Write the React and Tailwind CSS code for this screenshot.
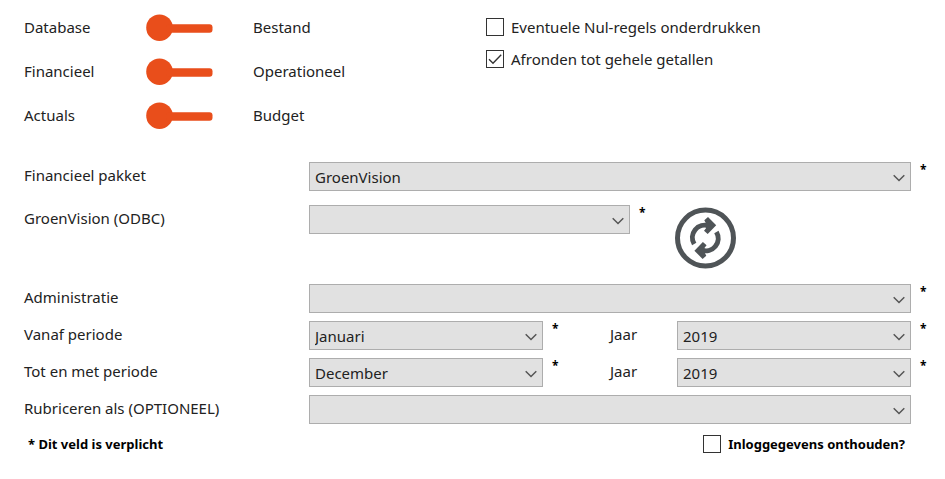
import React, { useState } from 'react';

const months = [
    'Januari', 'Februari', 'Maart', 'April', 'Mei', 'Juni',
    'Juli', 'Augustus', 'September', 'Oktober', 'November', 'December',
];
const years = ['2017', '2018', '2019', '2020'];

const toggles = [
    { left: 'Database', right: 'Bestand' },
    { left: 'Financieel', right: 'Operationeel' },
    { left: 'Actuals', right: 'Budget' },
];

const Toggle = ({ left, right }) => {
    const [on, setOn] = useState(false);
    return (
        <div className="flex h-7 items-center">
            <span className="w-[122px]">{left}</span>
            <button
                type="button"
                role="switch"
                aria-checked={on}
                aria-label={`${left} / ${right}`}
                onClick={() => setOn(!on)}
                className="w-[107px]"
            >
                <svg width="68" height="28" viewBox="0 0 68 28" fill="#e94e1b" className={on ? 'rotate-180' : ''}>
                    <circle cx="13.5" cy="14.7" r="13.3" />
                    <rect x="20" y="11.2" width="46.5" height="8.5" rx="3" />
                </svg>
            </button>
            <span>{right}</span>
        </div>
    );
};

const Check = ({ id, label, defaultChecked, bold }) => (
    <div className="flex h-[18px] items-center gap-[7px]">
        <span className="relative flex h-[18px] w-[18px]">
            <input
                id={id}
                type="checkbox"
                defaultChecked={defaultChecked}
                className="peer h-[18px] w-[18px] appearance-none border border-[#333333] bg-white"
            />
            <svg
                viewBox="0 0 18 18"
                fill="none"
                stroke="#333333"
                strokeWidth="1.4"
                className="pointer-events-none absolute inset-0 hidden peer-checked:block"
            >
                <path d="M3 9.2 L7 13.2 L15.2 4.8" />
            </svg>
        </span>
        <label htmlFor={id} className={bold ? 'text-[13px] font-bold text-black' : ''}>{label}</label>
    </div>
);

const Select = ({ id, options = [], value = '', className = '' }) => (
    <div className={`relative ${className}`}>
        <select
            id={id}
            defaultValue={value}
            className="block h-[29px] w-full appearance-none border border-[#adadad] bg-[#e1e1e1] pl-[5px] pr-6"
        >
            {!value && <option value="" />}
            {options.map((o) => <option key={o}>{o}</option>)}
        </select>
        <svg
            width="12"
            height="8"
            viewBox="0 0 12 8"
            fill="none"
            stroke="#555555"
            strokeWidth="1.5"
            className="pointer-events-none absolute right-[6px] top-3"
        >
            <path d="M0.7 1.2 L6 6.5 L11.3 1.2" />
        </svg>
    </div>
);

const Star = () => (
    <span className="block pl-[9px] text-[12px] font-bold leading-4 text-black" aria-hidden="true">*</span>
);

const Row = ({ id, label, required, className = '', children }) => (
    <div className={`grid grid-cols-[285px_1fr_34px] items-start ${className}`}>
        <label htmlFor={id}>{label}</label>
        {children}
        {required && <Star />}
    </div>
);

const Period = ({ id, label, month }) => (
    <Row id={id} label={label} required>
        <div className="flex items-start">
            <Select id={id} options={months} value={month} className="flex-1" />
            <div className="flex w-[134px]">
                <span className="w-[67px]"><Star /></span>
                <label htmlFor={`${id}-jaar`}>Jaar</label>
            </div>
            <Select id={`${id}-jaar`} options={years} value="2019" className="flex-1" />
        </div>
    </Row>
);

const RefreshIcon = () => (
    <svg width="62" height="62" viewBox="0 0 62 62" fill="none" stroke="#4f5457" strokeWidth="5">
        <circle cx="30.5" cy="31" r="28" />
        <path d="M19.2 37 A12.4 12.4 0 0 1 34 18.9" />
        <path d="M33 10 L41.2 18.3 L32.7 27 L29 23.7 L31 21.3 L31 16.5 L29.3 13.2 Z" fill="#4f5457" stroke="none" />
        <path d="M41.4 25 A12.4 12.4 0 0 1 26.6 43.1" />
        <path d="M27.6 52 L19.4 43.7 L27.9 35 L31.6 38.3 L29.6 40.7 L29.6 45.5 L31.3 48.8 Z" fill="#4f5457" stroke="none" />
    </svg>
);

const App = () => (
    <form className="min-h-screen bg-white pl-6 pt-[13px] font-['Noto_Sans',sans-serif] text-[15px] leading-[26px] text-[#222222]">
        <div className="flex">
            <div className="flex w-[462px] flex-col gap-4">
                {toggles.map((t) => <Toggle key={t.left} {...t} />)}
            </div>
            <div className="flex flex-col gap-[14px] pt-[5px]">
                <Check id="nulregels" label="Eventuele Nul-regels onderdrukken" />
                <Check id="afronden" label="Afronden tot gehele getallen" defaultChecked />
            </div>
        </div>

        <div className="flex flex-col gap-2 pt-[33px]">
            <Row id="pakket" label="Financieel pakket" required>
                <Select id="pakket" options={['GroenVision']} value="GroenVision" />
            </Row>
            <Row id="odbc" label="GroenVision (ODBC)" className="min-h-[77px] pt-[6px]">
                <div className="flex items-start">
                    <Select id="odbc" className="w-[321px]" />
                    <span className="w-[45px]"><Star /></span>
                    <button type="button" aria-label="Vernieuwen" className="pt-[2px]">
                        <RefreshIcon />
                    </button>
                </div>
            </Row>
            <Row id="administratie" label="Administratie" required>
                <Select id="administratie" />
            </Row>
            <Period id="vanaf" label="Vanaf periode" month="Januari" />
            <Period id="tot" label="Tot en met periode" month="December" />
            <Row id="rubriceren" label="Rubriceren als (OPTIONEEL)">
                <Select id="rubriceren" />
            </Row>
        </div>

        <div className="flex items-center justify-between pl-1 pr-10 pt-[7px]">
            <p className="text-[13px] font-bold text-black">* Dit veld is verplicht</p>
            <Check id="onthouden" label="Inloggegevens onthouden?" bold />
        </div>
    </form>
);

export default App;
